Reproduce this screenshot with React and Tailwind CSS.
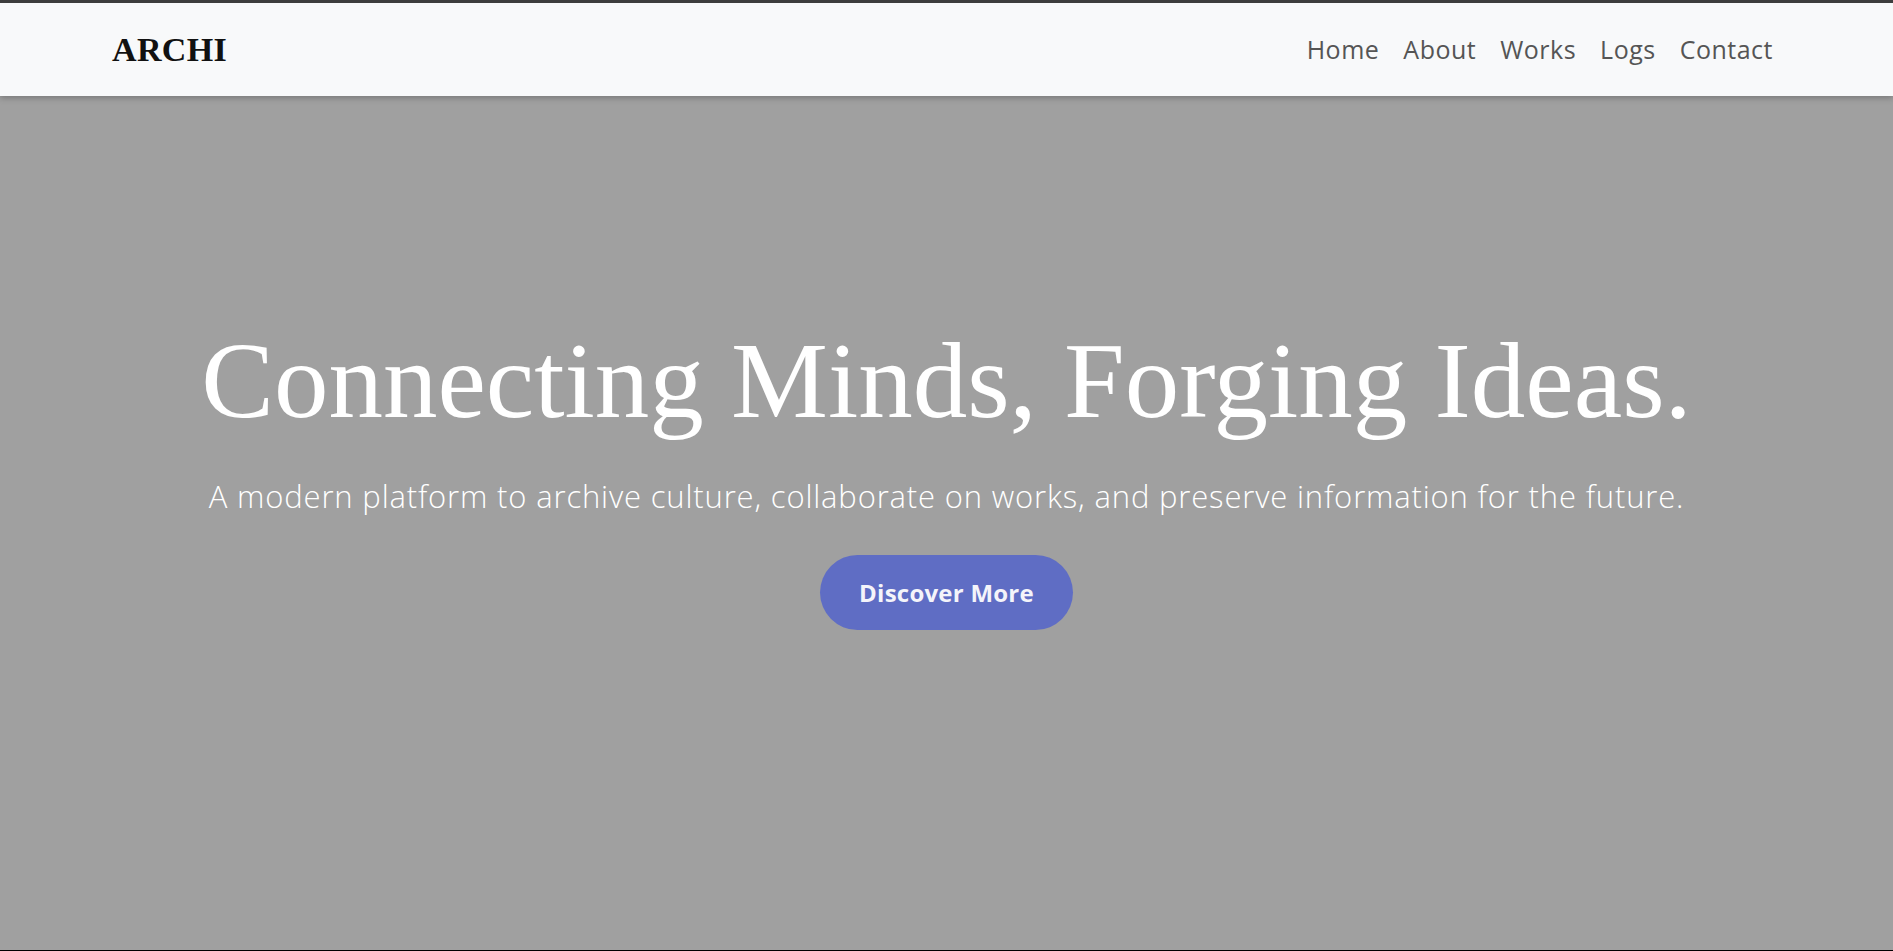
export default function App() {
  const links = ['Home', 'About', 'Works', 'Logs', 'Contact'];

  return (
    <div className="h-screen flex flex-col bg-[#a0a0a0]">
      {/* Header */}
      <header className="relative z-10 shrink-0 h-[96px] border-t-[3px] border-[#3d3d3d] bg-[#f8f9fa] shadow-[0_2px_6px_rgba(0,0,0,0.25)]">
        <div className="h-full flex items-center justify-between pl-[112px] pr-[120px]">
          <a
            href="#"
            className="text-[34px] font-bold text-[#111] tracking-[0.01em] font-['Liberation_Serif',serif]"
          >
            ARCHI
          </a>
          <nav className="flex items-center gap-[24px]">
            {links.map((link) => (
              <a
                key={link}
                href="#"
                className="text-[25px] tracking-[0.02em] text-[#555] font-['Open_Sans',sans-serif]"
              >
                {link}
              </a>
            ))}
          </nav>
        </div>
      </header>

      {/* Hero */}
      <section className="flex-1 flex flex-col items-center pt-[220px] border-b border-black text-white">
        <h1 className="text-[109px] leading-[1.2] font-normal font-['Liberation_Serif',serif]">
          Connecting Minds, Forging Ideas.
        </h1>
        <p className="mt-[26px] text-[31px] leading-[1.5] tracking-[0.027em] font-light font-['Open_Sans',sans-serif]">
          A modern platform to archive culture, collaborate on works, and preserve information for the future.
        </p>
        <a
          href="#"
          className="mt-[36px] inline-flex items-center justify-center w-[253px] h-[75px] rounded-full bg-[#5f6dc4] text-[#f4f4fa] text-[24px] tracking-[0.01em] font-bold font-['Open_Sans',sans-serif]"
        >
          Discover More
        </a>
      </section>
    </div>
  );
}
